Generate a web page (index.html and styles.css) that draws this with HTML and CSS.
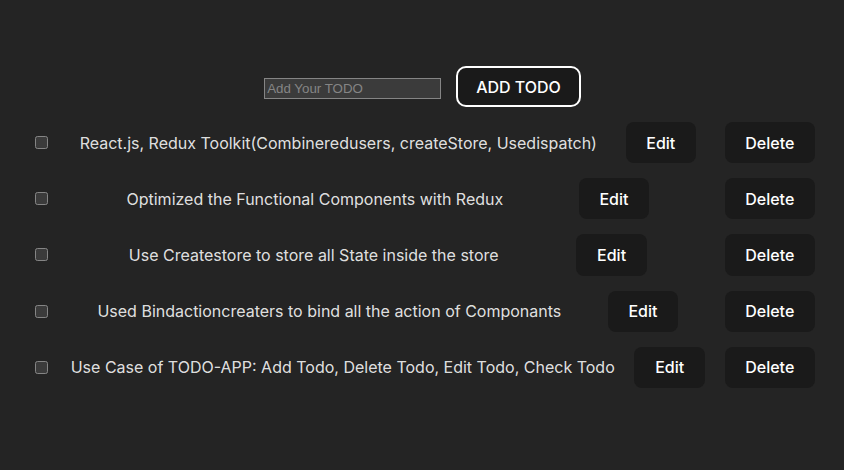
FILE: index.html
```html
<!DOCTYPE html>
<html lang="en">
<head>
<meta charset="utf-8">
<title>TODO</title>
<link rel="stylesheet" href="styles.css">
</head>
<body>
<div class="app">
  <div class="add-form">
    <input class="todo-input" type="text" placeholder="Add Your TODO">
    <button class="add-btn">ADD TODO</button>
  </div>
  <ul class="todo-list">
    <li class="todo-row">
      <input class="todo-check" type="checkbox">
      <span class="todo-text">React.js, Redux Toolkit(Combineredusers, createStore, Usedispatch)</span>
      <button class="btn">Edit</button>
      <button class="btn">Delete</button>
    </li>
    <li class="todo-row">
      <input class="todo-check" type="checkbox">
      <span class="todo-text">Optimized the Functional Components with Redux</span>
      <button class="btn">Edit</button>
      <button class="btn">Delete</button>
    </li>
    <li class="todo-row">
      <input class="todo-check" type="checkbox">
      <span class="todo-text">Use Createstore to store all State inside the store</span>
      <button class="btn">Edit</button>
      <button class="btn">Delete</button>
    </li>
    <li class="todo-row">
      <input class="todo-check" type="checkbox">
      <span class="todo-text">Used Bindactioncreaters to bind all the action of Componants</span>
      <button class="btn">Edit</button>
      <button class="btn">Delete</button>
    </li>
    <li class="todo-row">
      <input class="todo-check" type="checkbox">
      <span class="todo-text">Use Case of TODO-APP: Add Todo, Delete Todo, Edit Todo, Check Todo</span>
      <button class="btn">Edit</button>
      <button class="btn">Delete</button>
    </li>
  </ul>
</div>
</body>
</html>
```
FILE: styles.css
```css
html, body {
  margin: 0;
  padding: 0;
  background: #242424;
  color-scheme: dark;
}
body {
  font-family: Inter, "Noto Sans", sans-serif;
  color: rgba(255, 255, 255, 0.87);
  font-size: 16px;
}
.app {
  padding-top: 66px;
}
.add-form {
  display: flex;
  justify-content: center;
  align-items: center;
  gap: 15px;
  padding-left: 1px;
}
.todo-input {
  width: 177px;
  height: 21px;
  box-sizing: border-box;
  font-family: "Liberation Sans", Arial, sans-serif;
  font-size: 13.33px;
  background: #3b3b3b;
  border: 1px solid #858585;
  color: #fff;
  padding: 1px 2px;
  margin: 4px 0 0;
}
.todo-input::placeholder {
  color: #858585;
}
.add-btn {
  height: 41px;
  padding: 0 18px;
  border: 2px solid #ffffff;
  border-radius: 10px;
  background: #1a1a1a;
  color: #ffffff;
  font-family: Inter, sans-serif;
  font-size: 16px;
  font-weight: 500;
}
.todo-list {
  list-style: none;
  margin: 15px 0 0;
  padding: 0 29px 0 31px;
  display: flex;
  flex-direction: column;
  gap: 15px;
}
.todo-row {
  display: flex;
  justify-content: space-between;
  align-items: center;
}
.todo-check {
  width: 13px;
  height: 13px;
  margin: 3px 3px 3px 4px;
}
.todo-text {
  color: rgba(255, 255, 255, 0.87);
}
.btn {
  padding: 9.6px 19.7px;
  border: 1px solid transparent;
  border-radius: 8px;
  background: #1a1a1a;
  color: #ffffff;
  font-family: Inter, sans-serif;
  font-size: 16px;
  font-weight: 500;
  line-height: normal;
}
```
